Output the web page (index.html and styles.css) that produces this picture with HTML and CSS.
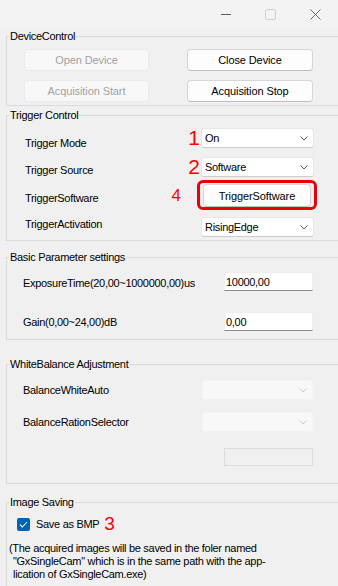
FILE: index.html
```html
<!DOCTYPE html>
<html lang="en">
<head>
  <meta charset="UTF-8">
  <meta name="viewport" content="width=device-width, initial-scale=1.0">
  <title>GxSingleCam</title>
  <link rel="stylesheet" href="styles.css">
</head>
<body>
<div class="window">

  <div class="titlebar">
    <span class="tb-btn">
      <svg width="10" height="1" viewBox="0 0 10 1"><rect width="10" height="1" fill="#5c5c5c"/></svg>
    </span>
    <span class="tb-btn">
      <svg width="11" height="11" viewBox="0 0 11 11"><rect x="0.5" y="0.5" width="10" height="10" rx="1.5" fill="none" stroke="#cfcfcf"/></svg>
    </span>
    <span class="tb-btn">
      <svg width="11" height="11" viewBox="0 0 11 11"><path d="M0.5 0.5L10.5 10.5M10.5 0.5L0.5 10.5" stroke="#6a6a6a" stroke-width="1"/></svg>
    </span>
  </div>

  <fieldset class="group group-device">
    <legend>DeviceControl</legend>
    <div class="device-grid">
      <button class="btn" disabled>Open Device</button>
      <button class="btn">Close Device</button>
      <button class="btn" disabled>Acquisition Start</button>
      <button class="btn">Acquisition Stop</button>
    </div>
  </fieldset>

  <fieldset class="group group-trigger">
    <legend>Trigger Control</legend>
    <div class="body">
      <div class="row row-mode">
        <span class="label">Trigger Mode</span>
        <span class="mark">1</span>
        <div class="combo"><span>On</span>
          <svg width="8" height="5" viewBox="0 0 8 5"><path d="M0.5 0.5L4 4L7.5 0.5" fill="none" stroke="#5e5e5e"/></svg>
        </div>
      </div>
      <div class="row row-source">
        <span class="label">Trigger Source</span>
        <span class="mark">2</span>
        <div class="combo"><span>Software</span>
          <svg width="8" height="5" viewBox="0 0 8 5"><path d="M0.5 0.5L4 4L7.5 0.5" fill="none" stroke="#5e5e5e"/></svg>
        </div>
      </div>
      <div class="row row-soft">
        <span class="label">TriggerSoftware</span>
        <span class="mark mark-small">4</span>
        <span class="highlight"><button class="btn btn-soft">TriggerSoftware</button></span>
      </div>
      <div class="row row-act">
        <span class="label">TriggerActivation</span>
        <span class="mark"></span>
        <div class="combo"><span>RisingEdge</span>
          <svg width="8" height="5" viewBox="0 0 8 5"><path d="M0.5 0.5L4 4L7.5 0.5" fill="none" stroke="#5e5e5e"/></svg>
        </div>
      </div>
    </div>
  </fieldset>

  <fieldset class="group group-basic">
    <legend>Basic Parameter settings</legend>
    <div class="body">
      <div class="row">
        <span class="label">ExposureTime(20,00~1000000,00)us</span>
        <input class="edit" type="text" value="10000,00">
      </div>
      <div class="row row-gain">
        <span class="label">Gain(0,00~24,00)dB</span>
        <input class="edit" type="text" value="0,00">
      </div>
    </div>
  </fieldset>

  <fieldset class="group group-wb">
    <legend>WhiteBalance Adjustment</legend>
    <div class="body">
      <div class="row">
        <span class="label">BalanceWhiteAuto</span>
        <div class="combo combo-off">
          <svg width="8" height="5" viewBox="0 0 8 5"><path d="M0.5 0.5L4 4L7.5 0.5" fill="none" stroke="#c9c9c9"/></svg>
        </div>
      </div>
      <div class="row row-ratio">
        <span class="label">BalanceRationSelector</span>
        <div class="combo combo-off">
          <svg width="8" height="5" viewBox="0 0 8 5"><path d="M0.5 0.5L4 4L7.5 0.5" fill="none" stroke="#c9c9c9"/></svg>
        </div>
      </div>
      <div class="row row-value">
        <input class="edit edit-off" type="text" disabled>
      </div>
    </div>
  </fieldset>

  <fieldset class="group group-save">
    <legend>Image Saving</legend>
    <div class="body">
      <div class="check-row">
        <span class="checkbox">
          <svg width="9" height="7" viewBox="0 0 9 7"><path d="M1 3.6L3.4 6L8 1" fill="none" stroke="#fff" stroke-width="1.1"/></svg>
        </span>
        <span>Save as BMP</span>
        <span class="mark-three">3</span>
      </div>
      <p class="note">
        <span>(The acquired images will be saved in the foler named</span>
        <span class="indent">"GxSingleCam" which is in the same path with the app-</span>
        <span class="indent">lication of GxSingleCam.exe)</span>
      </p>
    </div>
  </fieldset>

</div>
</body>
</html>
```

FILE: styles.css
```css
* { box-sizing: border-box; }

body {
  margin: 0;
  background-color: #f0f0f0;
  font-family: "Liberation Sans", Arial, sans-serif;
  font-size: 11px;
  letter-spacing: -0.3px;
  color: #000;
}

.window {
  width: 338px;
  height: 586px;
  overflow: hidden;
}

/* title bar */
.titlebar {
  height: 29px;
  display: flex;
  justify-content: flex-end;
  background-color: #f3f3f3;
}
.tb-btn {
  width: 45px;
  height: 28px;
  display: flex;
  align-items: center;
  justify-content: center;
}

/* group boxes */
.group {
  margin: 0 -8px 0 6px;
  padding: 0;
  border: 1px solid #dadada;
  min-width: 0;
}
.group legend {
  margin-left: 2px;
  padding: 0 1px;
  line-height: 14px;
}

.row { display: flex; align-items: flex-start; }
.label { flex: none; line-height: 14px; white-space: nowrap; }

/* buttons */
.btn {
  height: 22px;
  padding: 0;
  font: inherit;
  letter-spacing: -0.1px;
  color: #000;
  background-color: #fdfdfd;
  border: 1px solid #d6d6d6;
  border-bottom-color: #bfbfbf;
  border-radius: 4px;
}
.btn:disabled {
  color: #a3a3a3;
  background-color: #f8f8f8;
  border-color: #ebebeb;
}

/* combo boxes */
.combo {
  flex: none;
  width: 113px;
  height: 20px;
  display: flex;
  align-items: center;
  justify-content: space-between;
  padding: 0 5px 0 3px;
  line-height: 14px;
  background-color: #fff;
  border: 1px solid #e6e6e6;
  border-bottom-color: #cdcdcd;
  border-radius: 3px;
}
.combo-off {
  width: 111px;
  justify-content: flex-end;
  background-color: #f8f8f8;
  border-color: #f3f3f3;
}

/* text boxes */
.edit {
  flex: none;
  width: 89px;
  height: 19px;
  padding: 0 1px;
  font: inherit;
  letter-spacing: inherit;
  color: #000;
  background-color: #fff;
  border: 1px solid #eeeeee;
  border-bottom-color: #8a8a8a;
  border-radius: 0;
  outline: none;
}
.edit-off {
  height: 18px;
  background-color: #f0f0f0;
  border: 1px solid #dcdcdc;
}

/* annotation numbers */
.mark {
  flex: none;
  width: 36px;
  padding-right: 1px;
  text-align: right;
  font-size: 21px;
  line-height: 20px;
  letter-spacing: 0;
  color: #f00;
}
.mark-small {
  font-size: 17px;
  line-height: 28px;
  padding-top: 2px;
  padding-right: 20px;
}
.highlight {
  display: flex;
  margin-left: -4px;
  padding: 1px 3px 0;
  border: 3px solid #e8000b;
  border-radius: 6px;
}
.btn-soft {
  width: 108px;
  height: 23px;
}

/* DeviceControl */
.device-grid {
  display: grid;
  grid-template-columns: 125px 126px;
  column-gap: 38px;
  row-gap: 9px;
  padding: 6px 0 3px 17px;
}

/* Trigger Control */
.group-trigger { margin-top: 2px; }
.group-trigger .body { padding: 6px 0 3px 18px; }
.group-trigger .label { width: 140px; }
.row-mode { height: 20px; }
.row-mode .label { padding-top: 8px; }
.row-source { height: 20px; margin-top: 9px; }
.row-source .label { padding-top: 6px; }
.row-soft { height: 30px; margin-top: 3px; }
.row-soft .label { padding-top: 11px; }
.row-act { height: 20px; margin-top: 7px; }

/* Basic Parameter settings */
.group-basic { margin-top: 9px; }
.group-basic .body { padding: 8px 0 8px 16px; }
.group-basic .row { height: 19px; }
.group-basic .label { width: 201px; padding-top: 4px; }
.row-gain { margin-top: 21px; }
.row-gain .label { padding-top: 3px; }

/* WhiteBalance Adjustment */
.group-wb { margin-top: 17px; }
.group-wb .body { padding: 9px 0 17px 16px; }
.group-wb .row { height: 20px; }
.group-wb .label { width: 179px; padding-top: 3px; }
.row-ratio { margin-top: 12px; }
.group-wb .row-value { height: 18px; margin-top: 16px; padding-left: 201px; }

/* Image Saving */
.group-save { margin-top: 11px; min-height: 120px; }
.group-save .body { padding: 8px 0 0 2px; }
.check-row {
  display: flex;
  align-items: center;
  height: 14px;
  margin-left: 8px;
  line-height: 14px;
}
.checkbox {
  width: 13px;
  height: 13px;
  margin-right: 6px;
  display: flex;
  align-items: center;
  justify-content: center;
  background-color: #0063b8;
  border-radius: 2px;
}
.mark-three {
  margin-left: 5px;
  font-size: 19px;
  line-height: 14px;
  letter-spacing: 0;
  color: #f00;
}
.note {
  margin: 11px 0 0;
  line-height: 13px;
}
.note span { display: block; white-space: nowrap; }
.note .indent { padding-left: 4px; }
```
